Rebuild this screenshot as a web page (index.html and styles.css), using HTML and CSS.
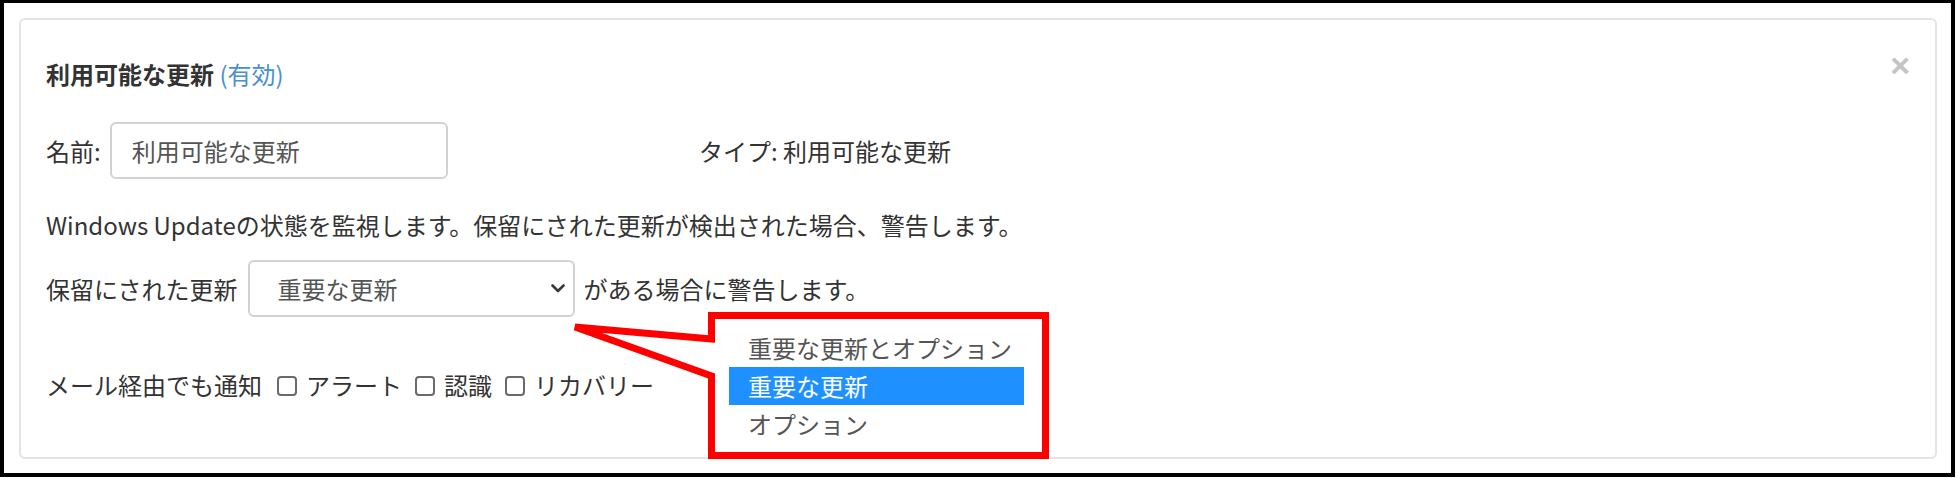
FILE: index.html
```html
<!DOCTYPE html>
<html lang="ja">
<head>
<meta charset="utf-8">
<title>利用可能な更新</title>
<link rel="stylesheet" href="styles.css">
</head>
<body>
<div class="frame">
  <div class="card">
    <div class="card-header">
      <h4 class="title">利用可能な更新 <span class="status">(有効)</span></h4>
      <button class="close" type="button">×</button>
    </div>
    <div class="name-row">
      <div class="name-group">
        <label class="name-label">名前:</label>
        <input class="field name-input" type="text" value="利用可能な更新">
      </div>
      <div class="type">タイプ: 利用可能な更新</div>
    </div>
    <p class="desc">Windows Updateの状態を監視します。保留にされた更新が検出された場合、警告します。</p>
    <div class="select-row">
      <span>保留にされた更新</span>
      <div class="select-wrap">
        <select class="field select">
          <option>重要な更新とオプション</option>
          <option selected>重要な更新</option>
          <option>オプション</option>
        </select>
        <svg class="chevron" width="14" height="9" viewBox="0 0 14 9"><polyline points="1.5,1.5 7,7 12.5,1.5" fill="none" stroke="#3a3a3a" stroke-width="2.6" stroke-linecap="round" stroke-linejoin="round"/></svg>
      </div>
      <span>がある場合に警告します。</span>
    </div>
    <div class="notify-row">
      <span>メール経由でも通知</span>
      <label class="check"><input type="checkbox"><span>アラート</span></label>
      <label class="check"><input type="checkbox"><span>認識</span></label>
      <label class="check"><input type="checkbox"><span>リカバリー</span></label>
    </div>
  </div>
  <div class="callout">
    <svg class="callout-shape" width="488" height="155" viewBox="0 0 488 155">
      <path d="M146.5,31 L10,19 L146.5,68 L146.5,147.5 L480.5,147.5 L480.5,7.5 L146.5,7.5 Z" fill="#ffffff" stroke="#ff0000" stroke-width="7" stroke-linejoin="miter"/>
    </svg>
    <ul class="dropdown">
      <li>重要な更新とオプション</li>
      <li class="active">重要な更新</li>
      <li>オプション</li>
    </ul>
  </div>
</div>
</body>
</html>
```

FILE: styles.css
```css
html, body {
  margin: 0;
  padding: 0;
  background: #ffffff;
}

.frame {
  position: relative;
  width: 1955px;
  height: 477px;
  box-sizing: border-box;
  border: 4px solid #000000;
  border-top-width: 3px;
  background: #ffffff;
  padding-top: 1px;
}

.card {
  box-sizing: border-box;
  width: 1918px;
  height: 441px;
  margin: 14px 0 0 15px;
  border: 2px solid #e4e4e4;
  border-radius: 6px;
  padding: 37px 25px 0 25px;
  font-family: "Noto Sans CJK JP", "Noto Sans", sans-serif;
  font-size: 24px;
  line-height: 34px;
  color: #333333;
}

.card-header {
  display: flex;
  justify-content: space-between;
  align-items: flex-start;
  height: 34px;
}

.title {
  margin: 0;
  font-size: 24px;
  line-height: 34px;
  font-weight: 700;
  color: #333333;
}

.status {
  font-weight: 400;
  color: #4a8fd0;
}

.close {
  margin: -9px 0 0 0;
  padding: 0;
  border: 0;
  background: transparent;
  font-family: "Liberation Sans", Arial, sans-serif;
  font-size: 34px;
  line-height: 34px;
  font-weight: 700;
  color: #c4c4c4;
}

.name-row {
  display: flex;
  align-items: center;
  height: 57px;
  margin-top: 31px;
}

.name-group {
  display: flex;
  align-items: center;
  gap: 9px;
  width: 653px;
}

.field {
  box-sizing: border-box;
  height: 57px;
  border: 2px solid #d2d2d2;
  border-radius: 6px;
  background: #ffffff;
  font-family: "Noto Sans CJK JP", "Noto Sans", sans-serif;
  font-size: 24px;
  color: #555555;
  outline: none;
}

.name-input {
  width: 338px;
  padding: 0 20px;
}

.desc {
  margin: 29px 0 0 0;
}

.select-row {
  display: flex;
  align-items: center;
  height: 57px;
  margin-top: 18px;
}

.select-wrap {
  position: relative;
  width: 327px;
  height: 57px;
  margin: 0 9px 0 10px;
}

.select {
  width: 327px;
  padding: 0 30px 0 28px;
  appearance: none;
  -webkit-appearance: none;
}

.chevron {
  position: absolute;
  right: 10px;
  top: 24px;
}

.notify-row {
  display: flex;
  align-items: center;
  height: 34px;
  margin-top: 51px;
}

.check {
  display: flex;
  align-items: center;
  gap: 9px;
  margin-left: 15px;
}

.check:nth-of-type(2),
.check:nth-of-type(3) {
  margin-left: 13px;
}

.check input {
  appearance: none;
  -webkit-appearance: none;
  box-sizing: border-box;
  width: 20px;
  height: 20px;
  margin: 1px 0 0 0;
  border: 2px solid #6a6a6a;
  border-radius: 4px;
  background: #ffffff;
}

.callout {
  position: absolute;
  left: 561px;
  top: 305px;
  width: 488px;
  height: 155px;
}

.callout-shape {
  display: block;
}

.dropdown {
  position: absolute;
  left: 164px;
  top: 21px;
  width: 295px;
  margin: 0;
  padding: 0;
  list-style: none;
  font-family: "Noto Sans CJK JP", "Noto Sans", sans-serif;
  font-size: 24px;
  line-height: 38px;
  color: #555555;
}

.dropdown li {
  height: 38px;
  padding-left: 19px;
}

.dropdown li.active {
  background: #1e90ff;
  color: #ffffff;
}
```
